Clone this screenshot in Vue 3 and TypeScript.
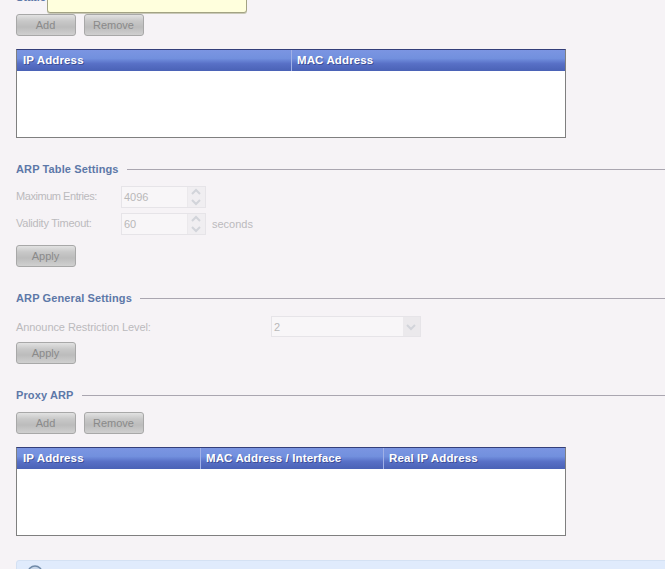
<script setup lang="ts">
interface Column { title: string; width: number }
const staticCols: Column[] = [
  { title: 'IP Address', width: 275 },
  { title: 'MAC Address', width: 273 },
]
const proxyCols: Column[] = [
  { title: 'IP Address', width: 184 },
  { title: 'MAC Address / Interface', width: 183 },
  { title: 'Real IP Address', width: 181 },
]
</script>

<template>
  <div class="page">
    <div class="tooltip"></div>
    <div class="clipped-title">Static</div>

    <div class="btn-row">
      <button class="btn" disabled>Add</button>
      <button class="btn" disabled>Remove</button>
    </div>
    <div class="grid">
      <div class="grid-head">
        <div v-for="c in staticCols" :key="c.title" class="grid-col" :style="{ width: c.width + 'px' }">{{ c.title }}</div>
      </div>
    </div>

    <div class="section s1"><span>ARP Table Settings</span><i></i></div>
    <div class="field f1">
      <label class="l-max">Maximum Entries:</label>
      <div class="spin">
        <span class="val">4096</span>
        <span class="arrows">
          <svg width="16" height="10" viewBox="0 0 16 10"><path d="M4 7l4-4 4 4" /></svg>
          <svg width="16" height="10" viewBox="0 0 16 10"><path d="M4 3l4 4 4-4" /></svg>
        </span>
      </div>
    </div>
    <div class="field f2">
      <label class="l-val">Validity Timeout:</label>
      <div class="spin">
        <span class="val">60</span>
        <span class="arrows">
          <svg width="16" height="10" viewBox="0 0 16 10"><path d="M4 7l4-4 4 4" /></svg>
          <svg width="16" height="10" viewBox="0 0 16 10"><path d="M4 3l4 4 4-4" /></svg>
        </span>
      </div>
      <span class="unit">seconds</span>
    </div>
    <button class="btn apply a1" disabled>Apply</button>

    <div class="section s2"><span>ARP General Settings</span><i></i></div>
    <div class="field f3">
      <label class="wide">Announce Restriction Level:</label>
      <div class="select">
        <span class="val">2</span>
        <span class="drop"><svg width="16" height="10" viewBox="0 0 16 10"><path d="M4 3l4 4 4-4" /></svg></span>
      </div>
    </div>
    <button class="btn apply a2" disabled>Apply</button>

    <div class="section s3"><span>Proxy ARP</span><i></i></div>
    <div class="btn-row r2">
      <button class="btn" disabled>Add</button>
      <button class="btn" disabled>Remove</button>
    </div>
    <div class="grid">
      <div class="grid-head">
        <div v-for="c in proxyCols" :key="c.title" class="grid-col" :style="{ width: c.width + 'px' }">{{ c.title }}</div>
      </div>
    </div>

    <div class="info">
      <svg class="info-icon" width="16" height="16" viewBox="0 0 16 16">
        <circle cx="8" cy="8" r="7" fill="#c7d6ea" stroke="#6f8aa8" stroke-width="1.5" />
      </svg>
    </div>
  </div>
</template>

<style>
html, body { margin: 0; overflow: hidden; background: #f6f3f6; }
</style>

<style scoped>
.page {
  position: relative;
  width: 665px;
  height: 569px;
  overflow: hidden;
  box-sizing: border-box;
  padding: 0 0 0 16px;
  background: #f6f3f6;
  font-family: "Liberation Sans", Arial, sans-serif;
  font-size: 11px;
  color: #bbbabd;
}
.clipped-title {
  height: 14px;
  margin-top: -10px;
  line-height: 14px;
  font-weight: 700;
  color: #5d78a8;
}
.tooltip {
  position: absolute;
  left: 47px;
  top: -10px;
  width: 198px;
  height: 21px;
  background: #ffffdd;
  border: 1px solid #a3a384;
  border-radius: 3px;
  box-shadow: 0 1px 0 #c9c9b8;
}
.btn-row { display: flex; gap: 8px; margin-top: 10px; }
.btn-row.r2 { margin-top: 10px; }
.btn {
  display: block;
  width: 60px;
  height: 22px;
  padding: 0 1px 0 0;
  box-sizing: border-box;
  border: 1px solid #a8a8a8;
  border-radius: 3px;
  background: linear-gradient(#e2e2e2 0%, #c8c8c8 30%, #bcbcbc 60%, #d0d0d0 100%);
  font: 11px "Liberation Sans", Arial, sans-serif;
  color: #8a8a8a;
}
.grid {
  width: 550px;
  height: 89px;
  margin-top: 13px;
  box-sizing: border-box;
  border: 1px solid #7f7f7f;
  border-top-color: #343f7a;
  background: #fff;
}
.grid-head {
  display: flex;
  height: 21px;
  background: linear-gradient(#7b95e2 0%, #7290de 40%, #5870c6 65%, #4a62b6 100%);
}
.grid-col {
  box-sizing: border-box;
  padding-left: 5px;
  line-height: 20px;
  font-size: 11.5px;
  font-weight: 700;
  letter-spacing: 0.12px;
  color: #fff;
  text-shadow: 1px 1px 0 rgba(40, 50, 110, 0.55);
  border-right: 1px solid #a0b0e6;
}
.grid-col:first-child { padding-left: 6px; }
.grid-col:last-child { border-right: 0; }
.section {
  display: flex;
  align-items: center;
  gap: 8px;
  height: 14px;
  font-weight: 700;
  letter-spacing: 0.12px;
  color: #5d78a8;
}
.section i { flex: 1; height: 1px; background: #aaa6b0; }
.s1 { margin-top: 24px; }
.s2 { margin-top: 24px; }
.s3 { margin-top: 24px; }
.field { display: flex; align-items: center; height: 22px; }
.f1 { margin-top: 10px; }
.f2 { margin-top: 5px; }
.f3 { margin-top: 11px; height: 21px; }
.field label { width: 105px; }
.field label.wide { width: 255px; letter-spacing: -0.08px; }
.field label.l-max { letter-spacing: -0.45px; position: relative; top: -1px; }
.field label.l-val { letter-spacing: -0.25px; position: relative; top: -1px; }
.spin, .select {
  display: flex;
  box-sizing: border-box;
  height: 22px;
  border: 1px solid #e6e4e8;
  background: #f8f6f8;
}
.spin { width: 85px; }
.select { width: 150px; height: 21px; }
.val { flex: 1; padding-left: 2px; line-height: 21px; color: #b8b8b8; }
.arrows {
  display: flex;
  flex-direction: column;
  justify-content: center;
  width: 17px;
  background: #f0eef1;
  border-left: 1px solid #ebe9ec;
}
.drop {
  display: flex;
  align-items: center;
  width: 17px;
  background: #ebe9ec;
}
svg path { fill: none; stroke: #d2d4da; stroke-width: 2; }
.unit { margin-left: 6px; }
.apply { width: 60px; }
.a1 { margin-top: 10px; }
.a2 { margin-top: 5px; }
.info {
  height: 40px;
  margin-top: 24px;
  margin-right: -10px;
  box-sizing: border-box;
  border: 1px solid #d4e1f3;
  border-radius: 3px;
  background: #e0ebfc;
  padding: 4px 0 0 10px;
}
.info-icon { display: block; }
</style>
